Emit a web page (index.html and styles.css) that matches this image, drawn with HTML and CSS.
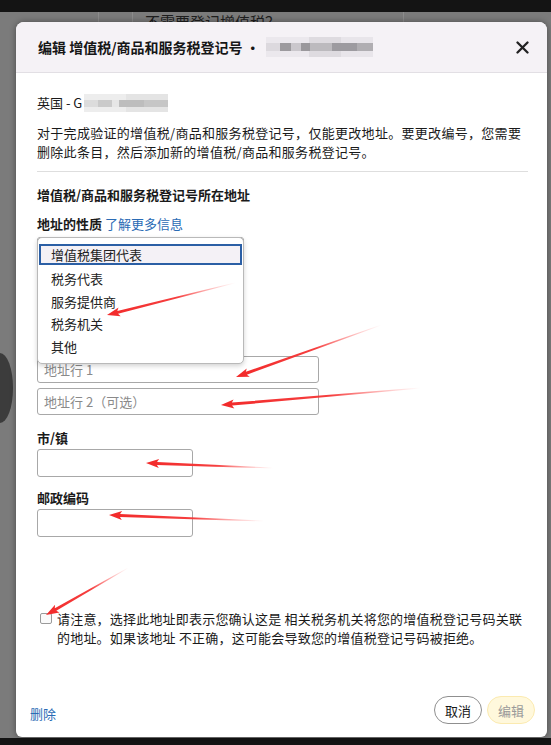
FILE: index.html
```html
<!DOCTYPE html>
<html lang="zh-CN">
<head>
    <meta charset="UTF-8">
    <meta name="viewport" content="width=device-width, initial-scale=1.0">
    <title>编辑 增值税/商品和服务税登记号</title>
    <link rel="stylesheet" href="styles.css">
</head>
<body>
    <div class="topbar"></div>

    <div class="stage">
        <!-- page behind the dialog -->
        <div class="behind-text">不需要登记增值税？</div>
        <div class="behind-line line-a"></div>
        <div class="behind-line line-b"></div>
        <div class="behind-line line-c"></div>
        <div class="side-bubble"></div>

        <div class="modal">
            <div class="modal-header">
                <div class="modal-title">编辑 增值税/商品和服务税登记号 · <span class="redact redact-title"></span></div>
                <svg class="close-icon" width="13" height="13" viewBox="0 0 13 13">
                    <path d="M1.5 1.5 L11.5 11.5 M11.5 1.5 L1.5 11.5" stroke="#222" stroke-width="2.3" stroke-linecap="round"/>
                </svg>
            </div>

            <div class="modal-body">
                <p class="country">英国 - G<span class="redact redact-number"></span></p>
                <p class="intro">对于完成验证的增值税/商品和服务税登记号，仅能更改地址。要更改编号，您需要删除此条目，然后添加新的增值税/商品和服务税登记号。</p>
                <hr class="divider">

                <p class="section-title">增值税/商品和服务税登记号所在地址</p>
                <p class="field-label">地址的性质 <a class="link" href="#">了解更多信息</a></p>

                <div class="nature-select">
                    <div class="select-closed"></div>
                    <ul class="listbox">
                        <li class="option selected">增值税集团代表</li>
                        <li class="option">税务代表</li>
                        <li class="option">服务提供商</li>
                        <li class="option">税务机关</li>
                        <li class="option">其他</li>
                    </ul>
                </div>

                <input class="text-input wide" type="text" placeholder="地址行 1">
                <input class="text-input wide second" type="text" placeholder="地址行 2（可选）">

                <p class="field-label city-label">市/镇</p>
                <input class="text-input short" type="text">

                <p class="field-label zip-label">邮政编码</p>
                <input class="text-input short" type="text">

                <div class="confirm-row">
                    <span class="checkbox"></span>
                    <p class="confirm-text">请注意，选择此地址即表示您确认这是 相关税务机关将您的增值税登记号码关联的地址。如果该地址 不正确，这可能会导致您的增值税登记号码被拒绝。</p>
                </div>
            </div>

            <div class="modal-footer">
                <a class="link delete-link" href="#">删除</a>
                <div class="footer-buttons">
                    <button class="btn btn-cancel">取消</button>
                    <button class="btn btn-edit">编辑</button>
                </div>
            </div>
        </div>
    </div>

    <div class="bottombar"></div>

    <!-- red annotation arrows drawn over the screenshot -->
    <svg class="annotations" width="551" height="745" viewBox="0 0 551 745">
        <defs>
            <linearGradient id="fade" x1="0" y1="0" x2="1" y2="0">
                <stop offset="0" stop-color="#f22a2a"/>
                <stop offset="0.55" stop-color="#f53535" stop-opacity="0.95"/>
                <stop offset="1" stop-color="#ff6a6a" stop-opacity="0"/>
            </linearGradient>
        </defs>
        <g fill="url(#fade)">
            <polygon transform="translate(107 315) rotate(-14.04)" points="0,0 13,-4.5 11,-1.5 132,-0.4 132,0.4 11,1.5 13,4.5"/>
            <polygon transform="translate(236 377) rotate(-19.73)" points="0,0 13,-4.5 11,-1.5 154,-0.4 154,0.4 11,1.5 13,4.5"/>
            <polygon transform="translate(221 405) rotate(-4.88)" points="0,0 13,-4.5 11,-1.5 200,-0.4 200,0.4 11,1.5 13,4.5"/>
            <polygon transform="translate(146 463) rotate(2.25)" points="0,0 13,-4.5 11,-1.5 127,-0.4 127,0.4 11,1.5 13,4.5"/>
            <polygon transform="translate(109 515) rotate(2.22)" points="0,0 13,-4.5 11,-1.5 155,-0.4 155,0.4 11,1.5 13,4.5"/>
            <polygon transform="translate(46 615) rotate(-29.82)" points="0,0 13,-4.5 11,-1.5 95,-0.4 95,0.4 11,1.5 13,4.5"/>
        </g>
    </svg>
</body>
</html>
```

FILE: styles.css
```css
* {
    box-sizing: border-box;
}
body {
    margin: 0;
    width: 551px;
    height: 745px;
    overflow: hidden;
    position: relative;
    background: #7b7b7b;
    font-family: "Noto Sans CJK SC", "Noto Sans", sans-serif;
    font-size: 13px;
    color: #1a1a1a;
}
p {
    margin: 0;
}
.topbar {
    height: 12px;
    background: #141414;
}
.bottombar {
    height: 7px;
    background: #141414;
}
.stage {
    position: relative;
    height: 726px;
    padding: 10px 4px 0 16px;
}

/* what shows of the page behind the overlay */
.behind-text {
    position: absolute;
    top: 1px;
    left: 145px;
    font-size: 15px;
    line-height: 18px;
    color: #1e1e1e;
}
.behind-line {
    position: absolute;
    top: 0;
    width: 1px;
    height: 12px;
    background: #8c8c8c;
}
.line-a { left: 98px; }
.line-b { left: 132px; }
.line-c { left: 403px; }
.side-bubble {
    position: absolute;
    top: 341px;
    left: -13px;
    width: 26px;
    height: 70px;
    border-radius: 50%;
    background: #3c3c3c;
}

/* dialog */
.modal {
    position: relative;
    z-index: 1;
    width: 531px;
    height: 715px;
    background: #fff;
    border-radius: 8px 8px 6px 6px;
    box-shadow: 0 0 6px rgba(0, 0, 0, 0.4);
    display: flex;
    flex-direction: column;
    overflow: hidden;
}
.modal-header {
    height: 51px;
    flex-shrink: 0;
    display: flex;
    align-items: center;
    justify-content: space-between;
    padding: 0 18px 0 22px;
    background: #f5f2f6;
    border-bottom: 1px solid #e2dfe4;
}
.modal-title {
    font-size: 14px;
    font-weight: 700;
    color: #161616;
    display: flex;
    align-items: center;
}
.redact {
    display: inline-block;
}
.redact-title {
    width: 107px;
    height: 20px;
    margin-left: 6px;
    background:
        linear-gradient(90deg, #dcd9de 0 13%, #9c9a9e 13% 23%, #cac7cc 23% 33%, #9a989c 33% 41%, #bcbabe 41% 62%, #9d9ba0 62% 85%, #b0aeb2 85% 100%) 0 6px / 100% 8px no-repeat,
        linear-gradient(90deg, #ebe8ed 0 40%, #dedbe0 40% 70%, #e8e5ea 70% 100%);
}
.redact-number {
    width: 84px;
    height: 18px;
    margin-left: 2px;
    vertical-align: -4px;
    background:
        linear-gradient(90deg, #dcdcdc 0 17%, #cacaca 17% 33%, #e6e6e6 33% 42%, #bdbdbd 42% 71%, #c6c6c6 71% 100%) 0 6px / 100% 7px no-repeat,
        linear-gradient(90deg, #ededed 0 50%, #e4e4e4 50% 100%);
}
.close-icon {
    display: block;
}

.modal-body {
    padding: 20px 19px 0 21px;
}
.country {
    line-height: 19px;
}
.intro {
    margin-top: 11px;
    line-height: 19px;
    letter-spacing: 0.3px;
}
.divider {
    margin: 10px 0 0;
    border: 0;
    border-top: 1px solid #dedede;
}
.section-title {
    margin-top: 13px;
    line-height: 19px;
    font-weight: 700;
}
.field-label {
    margin-top: 10px;
    line-height: 19px;
    font-weight: 700;
}
.link {
    color: #2a6bb5;
    font-weight: 400;
    text-decoration: none;
}

.nature-select {
    position: relative;
    height: 119px;
    margin-top: 4px;
}
.select-closed {
    width: 207px;
    height: 27px;
    border: 1px solid #a8a8a8;
    border-radius: 3px;
}
.listbox {
    position: absolute;
    z-index: 2;
    top: 0;
    left: 0;
    width: 207px;
    margin: 0;
    padding: 6px 1px 5px 1px;
    list-style: none;
    background: #fff;
    border: 1px solid #b9b9b9;
    border-radius: 5px;
    box-shadow: 0 2px 5px rgba(0, 0, 0, 0.18);
}
.option {
    height: 22.5px;
    line-height: 22.5px;
    padding-left: 12px;
    color: #222;
}
.option.selected {
    height: 21px;
    line-height: 17px;
    margin-bottom: 3px;
    padding-left: 10px;
    background: #f4f1f6;
    border: 2px solid #2b5fa5;
}

.text-input {
    display: block;
    height: 27px;
    padding: 0 6px;
    border: 1px solid #a8a8a8;
    border-radius: 3px;
    font-family: inherit;
    font-size: 13px;
    color: #1a1a1a;
    background: #fff;
    outline: none;
}
.text-input::placeholder {
    color: #8a8a8a;
}
.wide {
    width: 282px;
}
.second {
    margin-top: 5px;
}
.short {
    width: 156px;
    height: 28px;
    margin-top: 2px;
}
.city-label {
    margin-top: 13px;
}
.zip-label {
    margin-top: 11px;
}

.confirm-row {
    display: flex;
    align-items: flex-start;
    margin-top: 72px;
}
.checkbox {
    flex-shrink: 0;
    width: 12px;
    height: 11px;
    margin: 4px 5px 0 3px;
    border: 1px solid #9a9a9a;
    border-radius: 2px;
    background: #fafafa;
}
.confirm-text {
    line-height: 19px;
    letter-spacing: 0.2px;
}

.modal-footer {
    margin-top: auto;
    display: flex;
    align-items: center;
    justify-content: space-between;
    padding: 0 12px 13px 14px;
}
.delete-link {
    margin-top: 6px;
}
.footer-buttons {
    display: flex;
    gap: 5px;
}
.btn {
    width: 48px;
    height: 28px;
    border-radius: 14px;
    font-family: inherit;
    font-size: 13px;
    padding: 0;
    cursor: pointer;
}
.btn-cancel {
    background: #fff;
    border: 1px solid #8f8f8f;
    color: #1a1a1a;
}
.btn-edit {
    background: #fff8dc;
    border: 1px solid #fbeab0;
    color: #9a9a9a;
}

.annotations {
    position: absolute;
    top: 0;
    left: 0;
    z-index: 10;
    pointer-events: none;
}
```
